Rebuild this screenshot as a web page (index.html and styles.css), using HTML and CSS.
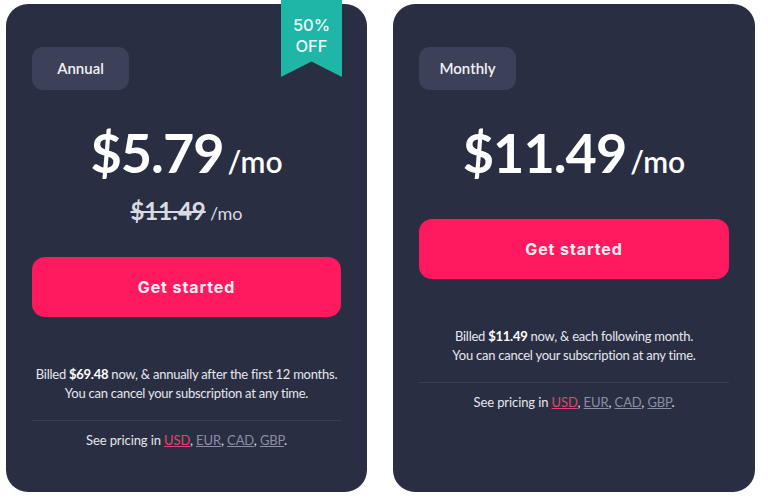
FILE: index.html
```html
<!DOCTYPE html>
<html lang="en">
<head>
<meta charset="utf-8">
<title>Pricing</title>
<link rel="stylesheet" href="styles.css">
</head>
<body>
<div class="plans">
  <section class="card">
    <div class="ribbon"><span>50%</span><span>OFF</span></div>
    <span class="badge">Annual</span>
    <div class="price"><span class="amount">$5.79</span><span class="per">/mo</span></div>
    <div class="old"><s class="old-amount">$11.49</s> <span class="old-per">/mo</span></div>
    <a class="cta" href="#">Get started</a>
    <p class="billing">Billed <b>$69.48</b> now, &amp; annually after the first 12 months.<br>You can cancel your subscription at any time.</p>
    <hr class="divider">
    <p class="currency">See pricing in <a class="cur active" href="#">USD</a>, <a class="cur" href="#">EUR</a>, <a class="cur" href="#">CAD</a>, <a class="cur" href="#">GBP</a>.</p>
  </section>
  <section class="card">
    <span class="badge">Monthly</span>
    <div class="price"><span class="amount">$11.49</span><span class="per">/mo</span></div>
    <a class="cta" href="#">Get started</a>
    <p class="billing">Billed <b>$11.49</b> now, &amp; each following month.<br>You can cancel your subscription at any time.</p>
    <hr class="divider">
    <p class="currency">See pricing in <a class="cur active" href="#">USD</a>, <a class="cur" href="#">EUR</a>, <a class="cur" href="#">CAD</a>, <a class="cur" href="#">GBP</a>.</p>
  </section>
</div>
</body>
</html>
```

FILE: styles.css
```css
* { box-sizing: border-box; }
html, body { margin: 0; padding: 0; background: #ffffff; }
body { font-family: "Lato", "Liberation Sans", sans-serif; color: #e9e9ef; }

.plans {
  display: flex;
  gap: 26px;
  padding: 4px 0 0 6px;
}

.card {
  position: relative;
  width: 361px;
  height: 488px;
  background: #2a2e42;
  border-radius: 22px;
  padding: 43px 26px 0;
  display: flex;
  flex-direction: column;
  align-items: stretch;
}
.card + .card { width: 362px; }

.ribbon {
  position: absolute;
  top: -4px;
  left: 275px;
  width: 61px;
  height: 77px;
  background: #1fb6a7;
  clip-path: polygon(0 0, 100% 0, 100% 100%, 50% 80%, 0 100%);
  display: flex;
  flex-direction: column;
  align-items: center;
  padding-top: 15px;
  font-family: "Inter", "Noto Sans", sans-serif;
  font-size: 16.5px;
  line-height: 21px;
  font-weight: 500;
  color: #effcf9;
}

.badge {
  align-self: flex-start;
  width: 97px;
  height: 43px;
  border-radius: 11px;
  background: #3c4058;
  font-size: 15px;
  font-weight: 600;
  line-height: 43px;
  text-align: center;
  color: #f2f2f6;
}

.price {
  margin-top: 35px;
  height: 56px;
  display: flex;
  justify-content: center;
  align-items: baseline;
  line-height: 56px;
  color: #ffffff;
  font-weight: 700;
}
.amount { font-size: 54px; letter-spacing: -1px; }
.per { font-size: 30px; margin-left: 4px; font-weight: 600; }

.old {
  margin-top: 18px;
  height: 24px;
  line-height: 24px;
  text-align: center;
  color: #d9dae2;
}
.old-amount { font-size: 24px; font-weight: 700; }
.old-per { font-size: 18px; }

.cta {
  margin-top: 34px;
  height: 60px;
  border-radius: 13px;
  background: #ff1a5f;
  color: #fbeef2;
  text-decoration: none;
  display: flex;
  align-items: center;
  justify-content: center;
  font-family: "Inter", "Noto Sans", sans-serif;
  font-weight: 700;
  font-size: 16px;
  letter-spacing: 0.9px;
}
.card > .price + .cta { margin-top: 38px; }

.billing {
  margin: 48px -20px 0;
  font-size: 13px;
  line-height: 19px;
  letter-spacing: -0.25px;
  white-space: nowrap;
  text-align: center;
  color: #e6e7ee;
}
.billing b { font-weight: 700; color: #ffffff; }

.divider {
  margin: 17px 0 0;
  border: 0;
  border-top: 1px solid #3a3e54;
  height: 0;
}

.currency {
  margin: 10px 0 0;
  font-size: 13px;
  line-height: 19px;
  letter-spacing: -0.1px;
  text-align: center;
  color: #e6e7ee;
}
.cur { color: #8a8fa6; text-decoration: underline; }
.cur.active { color: #e0476f; }
```
